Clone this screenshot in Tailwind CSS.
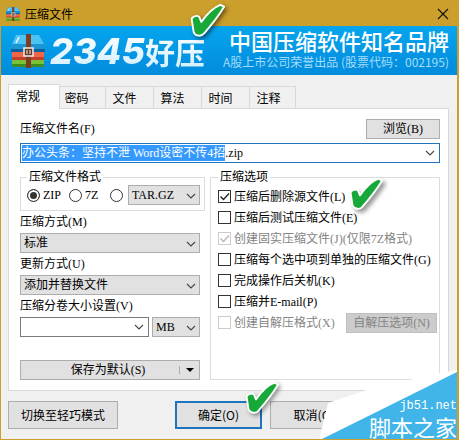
<!DOCTYPE html>
<html lang="zh-CN">
<head>
    <meta charset="UTF-8">
    <meta name="viewport" content="width=device-width, initial-scale=1.0">
    <title>压缩文件</title>
    <script src="https://cdn.jsdelivr.net/npm/@tailwindcss/browser@4"></script>
</head>
<body class="bg-[#f0f0f0]">
    <svg class="hidden">
        <symbol id="chevron" viewBox="0 0 10 6"><path d="M1 1l4 4 4-4" fill="none" stroke="#444" stroke-width="1.1"/></symbol>
        <symbol id="tick" viewBox="0 0 13 13"><path d="M2.5 6.5l3 3 5.500-6" fill="none" stroke="currentColor" stroke-width="1.3"/></symbol>
        <symbol id="mark" viewBox="0 0 40 40">
            <path d="M4 20C3 17 10 14 12 17L14 22C19 15 26 7 34 4L38 6C32 16 24 26 17 34C14 38 8 37 6 33Z" fill="#16a838" stroke="#fff" stroke-width="2" stroke-linejoin="round"/>
        </symbol>
        <symbol id="box" viewBox="0 0 36 34">
            <path d="M6 1H29L35 11V17H1V11Z" fill="#1b95d3"/>
            <path d="M6 1H29L34 10H2Z" fill="#4cc3f2"/>
            <path d="M6 9L9 3" stroke="#e8f9ff" stroke-width="1.500"/>
            <path d="M1 15H35V18H1Z" fill="#0c5f9c"/>
            <path d="M2 18H34V25H2Z" fill="#ee6548"/>
            <path d="M2 23H34V26H2Z" fill="#c23f2e"/>
            <path d="M2 26H34V33H2Z" fill="#79c236"/>
            <path d="M2 30H34V33H2Z" fill="#3f8c22"/>
            <path d="M16 0H21V34H16Z" fill="#7c3d20"/>
            <path d="M14 14H23V22H14Z" fill="#6b3a26" stroke="#eee" stroke-width="1.500"/>
            <path d="M17 16V20M20 16V20" stroke="#eee" stroke-width="1"/>
        </symbol>
    </svg>

    <div class="relative flex min-h-screen flex-col overflow-hidden border border-r-2 border-[#cb9f2b] text-xs text-black font-['Liberation_Serif','Noto_Sans_CJK_SC',serif]">

        <!-- Barra de título -->
        <header class="flex h-[25px] items-center bg-[#cb9f2b] pl-1 pr-2 font-['Noto_Sans_CJK_SC',sans-serif]">
            <svg class="h-3.5 w-4"><use href="#box"/></svg>
            <h1 class="ml-1">压缩文件</h1>
            <button aria-label="关闭" class="ml-auto">
                <svg class="h-3 w-3" viewBox="0 0 12 12"><path d="M1 1l10 10M11 1L1 11" stroke="#111" stroke-width="1.1"/></svg>
            </button>
        </header>

        <!-- Banner -->
        <div class="flex h-[49px] items-center bg-linear-to-b from-[#06a5ee] to-[#028bdc] pl-[9px] pr-2 font-['Noto_Sans_CJK_SC',sans-serif] text-white">
            <svg class="h-[34px] w-9 shrink-0"><use href="#box"/></svg>
            <div class="ml-1 flex items-center whitespace-nowrap bg-linear-to-b from-white to-[#cfeeff] bg-clip-text font-bold leading-10 text-transparent">
                <span class="text-[36px] font-extrabold italic font-['Inter',sans-serif]">2345</span>
                <span class="text-[30px]">好压</span>
            </div>
            <div class="ml-auto whitespace-nowrap pb-1 text-right">
                <p class="text-[22px] font-medium leading-[26px]">中国压缩软件知名品牌</p>
                <p class="leading-[18px] text-[#a5dcfa]">A股上市公司荣誉出品 (股票代码：002195)</p>
            </div>
        </div>

        <main class="flex grow flex-col pb-2.5 pl-[7px] pr-2 pt-[9px]">
            <!-- Pestañas -->
            <nav class="flex h-6 items-end font-['Noto_Sans_CJK_SC',sans-serif]">
                <button class="relative -mb-px h-[25px] w-[52px] border border-b-0 border-[#d9d9d9] bg-white pr-3 pb-0.5">常规</button>
                <button class="h-[22px] w-[46px] border-r border-t border-[#d9d9d9] pr-3">密码</button>
                <button class="h-[22px] w-12 border-r border-t border-[#d9d9d9] pr-2.5">文件</button>
                <button class="h-[22px] w-12 border-r border-t border-[#d9d9d9] pr-2.5">算法</button>
                <button class="h-[22px] w-12 border-r border-t border-[#d9d9d9] pr-2.5">时间</button>
                <button class="h-[22px] w-[46px] border-r border-t border-[#d9d9d9] pr-2">注释</button>
            </nav>

            <form class="grow border border-[#d9d9d9] bg-white pb-2.5 pl-[11px] pr-2 pt-2.5" onsubmit="return false">
                <div class="mb-1 flex h-5 items-center justify-between">
                    <label for="file-name">压缩文件名(F)</label>
                    <button class="h-5 w-[74px] border border-[#adadad] bg-[#e1e1e1]">浏览(B)</button>
                </div>
                <div class="flex h-5 items-center border border-[#1f74bd] pl-px pr-1">
                    <input id="file-name" type="text" value="办公头条：坚持不泄 Word设密不传4招.zip" class="h-4 min-w-0 grow leading-4 outline-none selection:bg-[#3399ff] selection:text-white">
                    <svg class="h-1.5 w-2.5"><use href="#chevron"/></svg>
                </div>

                <div class="mt-2 flex gap-[5px]">
                    <!-- Formato y método -->
                    <div class="w-[185px] shrink-0">
                        <fieldset class="border border-[#dcdcdc] pb-[5px] pl-1.5 pr-1 pt-0.5">
                            <legend class="px-0.5 leading-3">压缩文件格式</legend>
                            <div class="flex h-5 items-center">
                                <label class="flex w-[42px] items-center gap-[3px]"><input type="radio" name="format" checked class="h-[13px] w-[13px] appearance-none rounded-full border border-[#333] checked:bg-[#333] checked:shadow-[inset_0_0_0_2px_#fff]">ZIP</label>
                                <label class="flex w-[41px] items-center gap-[3px]"><input type="radio" name="format" class="h-[13px] w-[13px] appearance-none rounded-full border border-[#333]">7Z</label>
                                <input type="radio" name="format" aria-label="其他格式" class="h-[13px] w-[13px] appearance-none rounded-full border border-[#333]">
                                <div class="relative ml-auto w-[72px]">
                                    <select aria-label="格式" class="block h-5 w-full appearance-none border border-[#adadad] bg-[#e1e1e1] pl-[3px]"><option>TAR.GZ</option></select>
                                    <svg class="pointer-events-none absolute right-1 top-2 h-1.5 w-2.5"><use href="#chevron"/></svg>
                                </div>
                            </div>
                        </fieldset>
                        <div class="pr-[5px]">
                            <label for="method" class="block leading-[22px]">压缩方式(M)</label>
                            <div class="relative">
                                <select id="method" class="block h-5 w-full appearance-none border border-[#adadad] bg-[#e1e1e1] pl-[3px]"><option>标准</option></select>
                                <svg class="pointer-events-none absolute right-1 top-2 h-1.5 w-2.5"><use href="#chevron"/></svg>
                            </div>
                            <label for="update" class="block leading-[22px]">更新方式(U)</label>
                            <div class="relative">
                                <select id="update" class="block h-5 w-full appearance-none border border-[#adadad] bg-[#e1e1e1] pl-[3px]"><option>添加并替换文件</option></select>
                                <svg class="pointer-events-none absolute right-1 top-2 h-1.5 w-2.5"><use href="#chevron"/></svg>
                            </div>
                            <label for="volume" class="block leading-[22px]">压缩分卷大小设置(V)</label>
                            <div class="flex gap-[3px]">
                                <div class="flex h-5 grow items-center border border-[#7a7a7a] pr-1">
                                    <input id="volume" type="text" class="h-4 w-0 grow outline-none">
                                    <svg class="h-1.5 w-2.5"><use href="#chevron"/></svg>
                                </div>
                                <div class="relative w-12">
                                    <select aria-label="单位" class="block h-5 w-full appearance-none border border-[#adadad] bg-[#e1e1e1] pl-[3px]"><option>MB</option></select>
                                    <svg class="pointer-events-none absolute right-1 top-2 h-1.5 w-2.5"><use href="#chevron"/></svg>
                                </div>
                            </div>
                            <button class="mt-[23px] flex h-5 w-full items-center border border-[#adadad] bg-[#e1e1e1]">
                                <span class="grow pl-4">保存为默认(S)</span>
                                <span class="flex h-2 w-5 items-center justify-center border-l border-[#adadad]">
                                    <svg class="h-1 w-2" viewBox="0 0 8 4"><path d="M0 0h8L4 4z"/></svg>
                                </span>
                            </button>
                        </div>
                    </div>

                    <!-- Opciones de compresión -->
                    <fieldset class="min-w-0 grow whitespace-nowrap border border-[#dcdcdc] pl-[7px] pr-0.5 pt-[3px]">
                        <legend class="px-0.5 leading-3">压缩选项</legend>
                        <label class="flex h-[21px] items-center gap-[3px]"><span class="grid"><input type="checkbox" checked class="col-start-1 row-start-1 h-[13px] w-[13px] appearance-none border border-[#333]"><svg class="pointer-events-none col-start-1 row-start-1 h-[13px] w-[13px] text-[#222]"><use href="#tick"/></svg></span>压缩后删除源文件(L)</label>
                        <label class="flex h-[21px] items-center gap-[3px]"><input type="checkbox" class="h-[13px] w-[13px] appearance-none border border-[#333]">压缩后测试压缩文件(E)</label>
                        <label class="flex h-[21px] items-center gap-[3px] text-[#838383]"><span class="grid"><input type="checkbox" checked disabled class="col-start-1 row-start-1 h-[13px] w-[13px] appearance-none border border-[#ccc]"><svg class="pointer-events-none col-start-1 row-start-1 h-[13px] w-[13px] text-[#b5b5b5]"><use href="#tick"/></svg></span>创建固实压缩文件(J)(仅限7Z格式)</label>
                        <label class="flex h-[21px] items-center gap-[3px]"><input type="checkbox" class="h-[13px] w-[13px] appearance-none border border-[#333]">压缩每个选中项到单独的压缩文件(G)</label>
                        <label class="flex h-[21px] items-center gap-[3px]"><input type="checkbox" class="h-[13px] w-[13px] appearance-none border border-[#333]">完成操作后关机(K)</label>
                        <label class="flex h-[21px] items-center gap-[3px]"><input type="checkbox" class="h-[13px] w-[13px] appearance-none border border-[#333]">压缩并E-mail(P)</label>
                        <div class="flex h-[21px] items-center justify-between">
                            <label class="flex items-center gap-[3px] text-[#838383]"><input type="checkbox" disabled class="h-[13px] w-[13px] appearance-none border border-[#ccc]">创建自解压格式(X)</label>
                            <button disabled class="h-5 w-[91px] border border-[#bfbfbf] bg-[#cccccc] text-[#838383]">自解压选项(N)</button>
                        </div>
                    </fieldset>
                </div>
            </form>

            <footer class="mt-2.5 flex h-7 font-['Noto_Sans_CJK_SC',sans-serif]">
                <button class="w-[110px] border border-[#adadad] bg-[#e1e1e1]">切换至轻巧模式</button>
                <button class="ml-auto w-[87px] border-2 border-[#1f74bd] bg-[#e1e1e1]">确定(O)</button>
                <button class="ml-2 mr-[92px] w-[87px] border border-[#adadad] bg-[#e1e1e1]">取消(C)</button>
            </footer>
        </main>

        <!-- Marcas verdes -->
        <svg class="pointer-events-none absolute left-[187px] top-0 h-[38px] w-[38px] drop-shadow-[2px_2px_2px_rgba(0,0,0,0.5)]"><use href="#mark"/></svg>
        <svg class="pointer-events-none absolute left-[346px] top-[174px] h-[37px] w-[37px] drop-shadow-[3px_3px_2px_rgba(0,0,0,0.4)]"><use href="#mark"/></svg>
        <svg class="pointer-events-none absolute left-[242px] top-[378px] h-[37px] w-[37px] drop-shadow-[2px_2px_2px_rgba(0,0,0,0.4)]"><use href="#mark"/></svg>

        <!-- Marca de agua -->
        <div class="pointer-events-none absolute -bottom-px -right-0.5 h-[70px] w-[140px] text-white">
            <svg class="absolute inset-0 h-full w-full" viewBox="0 0 140 70">
                <path d="M0 70L9 33L48 20L120 3L140 0V70Z" fill="#fff"/>
                <path d="M1 70L140 1V70Z" fill="#41b4e9"/>
            </svg>
            <div class="relative flex h-full flex-col items-end justify-end pr-0.5">
                <p class="text-xs leading-3 font-['Liberation_Mono',monospace]">jb51.net</p>
                <p class="text-[22px] leading-7 font-['Noto_Sans_CJK_SC',sans-serif]">脚本之家</p>
            </div>
        </div>
    </div>

    <script>
        document.addEventListener("DOMContentLoaded", function() {
            const fileName = document.getElementById("file-name");
            fileName.focus();
            fileName.setSelectionRange(0, fileName.value.lastIndexOf("."));
        });
    </script>
</body>
</html>
